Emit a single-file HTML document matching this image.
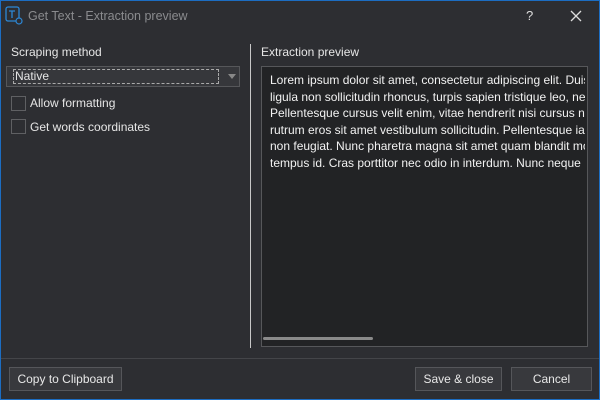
<!DOCTYPE html>
<html><head><style>
*{margin:0;padding:0;box-sizing:border-box}
body{width:600px;height:400px;background:#2d2e32;font-family:"Liberation Sans",sans-serif;font-size:12px;color:#e6e6e6;position:relative;overflow:hidden}
.frame{position:absolute;inset:0;border:1px solid #1c6dc2}
.abs{position:absolute}
.title{left:28px;top:9px;color:#8a8b8e;font-size:12.5px}
.cb{width:15px;height:15px;border:1px solid #5f6063;background:#2d2e32}
.btn{border:1px solid #55565a;background:#38393d;color:#e8e8e8;text-align:center;line-height:22px;font-size:12px}
.txt{left:261px;top:66px;width:327px;height:281px;border:1px solid #56575a;background:#222325;overflow:hidden}
.clip{position:absolute;left:8px;top:5px;width:315px;height:200px;overflow:hidden}
.clip p{white-space:nowrap;line-height:16.5px;font-size:12px;color:#f2f2f2}
</style></head><body>
<div class="frame"></div>
<svg class="abs" style="left:5px;top:6px" width="18" height="20" viewBox="0 0 18 20"><rect x="1" y="1" width="13" height="14" rx="2" fill="none" stroke="#2d87d6" stroke-width="1.3"/><path d="M4 5h6M7 5v7" stroke="#2d87d6" stroke-width="1.3"/><circle cx="14" cy="15" r="3" fill="#2d2e32" stroke="#2d87d6" stroke-width="1.2"/></svg>
<div class="abs title">Get Text - Extraction preview</div>
<div class="abs" style="left:526px;top:8px;font-size:13px;color:#ddd">?</div>
<svg class="abs" style="left:570px;top:10px" width="12" height="12"><path d="M1 1L11 11M11 1L1 11" stroke="#ddd" stroke-width="1.3"/></svg>
<div class="abs" style="left:11px;top:45px">Scraping method</div>
<div class="abs" style="left:6px;top:66px;width:234px;height:21px;border:1px solid #56575a;background:#36373b"></div>
<div class="abs" style="left:13px;top:69px;width:206px;height:15px;border:1px dashed #aaa"></div>
<div class="abs" style="left:15px;top:69px;line-height:15px">Native</div>
<svg class="abs" style="left:228px;top:74px" width="8" height="5"><path d="M0 0h8L4 5z" fill="#888"/></svg>
<div class="abs cb" style="left:11px;top:96px"></div>
<div class="abs" style="left:30px;top:96px">Allow formatting</div>
<div class="abs cb" style="left:11px;top:119px"></div>
<div class="abs" style="left:30px;top:120px">Get words coordinates</div>
<div class="abs" style="left:250px;top:44px;width:1px;height:304px;background:#c8c8c8"></div>
<div class="abs" style="left:261px;top:45px">Extraction preview</div>
<div class="abs txt"><div class="clip"><p>Lorem ipsum dolor sit amet, consectetur adipiscing elit. Duis<br>ligula non sollicitudin rhoncus, turpis sapien tristique leo, nec<br>Pellentesque cursus velit enim, vitae hendrerit nisi cursus non<br>rutrum eros sit amet vestibulum sollicitudin. Pellentesque iacu<br>non feugiat. Nunc pharetra magna sit amet quam blandit mo<br>tempus id. Cras porttitor nec odio in interdum. Nunc neque</p></div>
<div class="abs" style="left:1px;top:270px;width:110px;height:3px;background:#8a8a8a;border-radius:2px"></div></div>
<div class="abs" style="left:1px;top:358px;width:598px;height:1px;background:#444549"></div>
<div class="abs btn" style="left:9px;top:367px;width:113px;height:24px">Copy to Clipboard</div>
<div class="abs btn" style="left:415px;top:367px;width:87px;height:24px">Save &amp; close</div>
<div class="abs btn" style="left:511px;top:367px;width:81px;height:24px">Cancel</div>
</body></html>
